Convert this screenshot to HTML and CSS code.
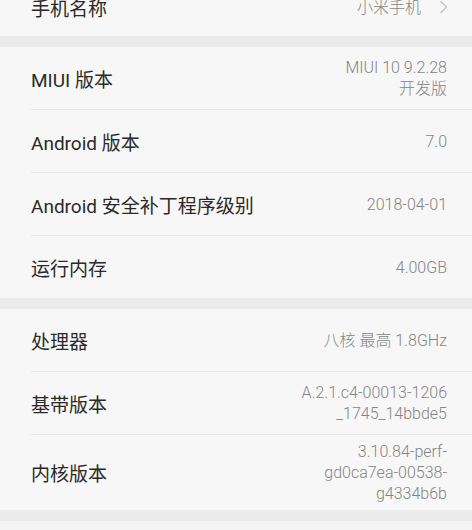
FILE: index.html
```html
<!DOCTYPE html>
<html lang="zh-CN">
<head>
  <meta charset="UTF-8" />
  <meta name="viewport" content="width=device-width, initial-scale=1.0"/>
  <title>关于手机</title>
  <link rel="stylesheet" href="styles.css">
</head>
<body>
  <div class="page">
    <div class="group top">
      <div class="row">
        <div class="label">手机名称</div>
        <div class="value link">
          小米手机
          <svg class="chevron" width="9" height="14" viewBox="0 0 9 14">
            <path d="M1.5 1 L7.5 7 L1.5 13" fill="none" stroke="#c2c2c2" stroke-width="1.2"/>
          </svg>
        </div>
      </div>
    </div>

    <div class="group">
      <div class="row">
        <div class="label">MIUI 版本</div>
        <div class="value">MIUI 10 9.2.28<br>开发版</div>
      </div>
      <div class="row">
        <div class="label">Android 版本</div>
        <div class="value">7.0</div>
      </div>
      <div class="row">
        <div class="label">Android 安全补丁程序级别</div>
        <div class="value">2018-04-01</div>
      </div>
      <div class="row">
        <div class="label">运行内存</div>
        <div class="value">4.00GB</div>
      </div>
    </div>

    <div class="group">
      <div class="row">
        <div class="label">处理器</div>
        <div class="value">八核 最高 1.8GHz</div>
      </div>
      <div class="row">
        <div class="label">基带版本</div>
        <div class="value">A.2.1.c4-00013-1206<br>_1745_14bbde5</div>
      </div>
      <div class="row">
        <div class="label">内核版本</div>
        <div class="value">3.10.84-perf-<br>gd0ca7ea-00538-<br>g4334b6b</div>
      </div>
    </div>

    <div class="group last"></div>
  </div>
</body>
</html>
```

FILE: styles.css
```css
body {
  margin: 0;
  font-family: Roboto, "Noto Sans CJK SC", sans-serif;
  background-color: #ebebeb;
  overflow: hidden;
}

.page {
  display: flex;
  flex-direction: column;
  gap: 11px;
}

.group {
  background-color: #f7f7f7;
}

.group.top {
  margin-top: -22px;
}

.group.last {
  height: 60px;
  background-color: #f4f4f4;
}

.row {
  display: flex;
  justify-content: space-between;
  align-items: center;
  min-height: 50px;
  margin-left: 31px;
  padding: 6px 25px 6px 0;
}

.row + .row {
  border-top: 1px solid #e6e6e6;
}

.group.top .row {
  min-height: 46px;
  padding-right: 24px;
}

.label {
  font-size: 19px;
  color: #2a2a2a;
}

.value {
  font-size: 16px;
  line-height: 21px;
  color: #858585;
  text-align: right;
  font-weight: 300;
}

.value.link {
  display: flex;
  align-items: center;
  gap: 18px;
}

.chevron {
  display: block;
}
```
